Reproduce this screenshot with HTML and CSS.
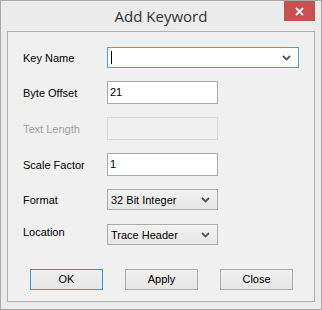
FILE: index.html
```html
<!DOCTYPE html>
<html lang="en">
<head>
    <meta charset="UTF-8">
    <title>Add Keyword</title>
    <link rel="stylesheet" href="styles.css">
</head>
<body>

    <!-- Dialog window -->
    <div class="window">
        <div class="title-bar">
            <span></span>
            <div class="title">Add Keyword</div>
            <div class="close-btn">
                <svg width="9" height="9" viewBox="0 0 9 9">
                    <path d="M1 1 L8 8 M8 1 L1 8" stroke="#fff" stroke-width="1.8" />
                </svg>
            </div>
        </div>

        <div class="client">
            <div class="form">
                <div class="row row-combo">
                    <label>Key Name</label>
                    <div class="combo combo-edit focused">
                        <span class="caret"></span>
                        <svg class="arrow" width="9" height="6" viewBox="0 0 9 6">
                            <path d="M1 1 L4.5 4.5 L8 1" fill="none" stroke="#555" stroke-width="1.8" />
                        </svg>
                    </div>
                </div>
                <div class="row row-field">
                    <label>Byte Offset</label>
                    <div class="field">21</div>
                </div>
                <div class="row row-field">
                    <label class="disabled">Text Length</label>
                    <div class="field field-disabled"></div>
                </div>
                <div class="row row-field">
                    <label>Scale Factor</label>
                    <div class="field">1</div>
                </div>
                <div class="row row-combo">
                    <label>Format</label>
                    <div class="combo combo-list">
                        <span>32 Bit Integer</span>
                        <svg class="arrow" width="9" height="6" viewBox="0 0 9 6">
                            <path d="M1 1 L4.5 4.5 L8 1" fill="none" stroke="#555" stroke-width="1.8" />
                        </svg>
                    </div>
                </div>
                <div class="row row-combo row-location">
                    <label>Location</label>
                    <div class="combo combo-list">
                        <span>Trace Header</span>
                        <svg class="arrow" width="9" height="6" viewBox="0 0 9 6">
                            <path d="M1 1 L4.5 4.5 L8 1" fill="none" stroke="#555" stroke-width="1.8" />
                        </svg>
                    </div>
                </div>
            </div>

            <div class="buttons">
                <div class="button default">OK</div>
                <div class="button">Apply</div>
                <div class="button">Close</div>
            </div>
        </div>
    </div>

</body>
</html>
```

FILE: styles.css
```css
/* Page */
body {
    margin: 0;
    font-family: "Liberation Sans", Arial, sans-serif;
    font-size: 11px;
    color: #000;
}

/* Window frame */
.window {
    width: 322px;
    height: 310px;
    box-sizing: border-box;
    border: 1px solid #a8a8a8;
    background-color: #ebebeb;
    display: flex;
    flex-direction: column;
    padding: 0 6px 7px 6px;
}

/* Title bar */
.title-bar {
    height: 30px;
    display: grid;
    grid-template-columns: 1fr auto 1fr;
    align-items: start;
}
.title {
    font-family: "Open Sans", "Noto Sans", sans-serif;
    font-size: 15px;
    color: #333;
    line-height: 30px;
}
.close-btn {
    justify-self: end;
    width: 31px;
    height: 20px;
    background-color: #c75050;
    display: flex;
    align-items: center;
    justify-content: center;
}

/* Client area */
.client {
    flex: 1;
    border: 1px solid #b0b0b0;
    background-color: #f0f0f0;
    display: flex;
    flex-direction: column;
}

.form {
    padding: 15px 0 0 15px;
    display: flex;
    flex-direction: column;
    gap: 13px;
}

.row {
    display: flex;
    align-items: center;
}
.row-combo {
    height: 21px;
}
.row-field {
    height: 23px;
}
.row-location {
    margin-top: 1px;
}
.row-location label {
    margin-top: -5px;
}

.row label {
    width: 84px;
}
.row label.disabled {
    color: #a0a0a0;
}

/* Text boxes */
.field {
    width: 111px;
    height: 23px;
    box-sizing: border-box;
    border: 1px solid #ababab;
    background-color: #fff;
    padding-left: 2px;
    line-height: 21px;
}
.field-disabled {
    background-color: #f0f0f0;
    border-color: #d9d9d9;
}

/* Combo boxes */
.combo {
    height: 21px;
    box-sizing: border-box;
    border: 1px solid #acacac;
    display: flex;
    align-items: center;
    justify-content: space-between;
    padding: 0 7px 0 3px;
}
.combo-edit {
    width: 192px;
    background-color: #fff;
}
.combo-list {
    width: 111px;
    background: linear-gradient(#f2f2f2, #e6e6e6);
}
.focused {
    border-color: #5a9de0;
}
.caret {
    width: 1px;
    height: 13px;
    background-color: #000;
}

/* Buttons */
.buttons {
    margin-top: 24px;
    padding-left: 22px;
    display: flex;
    gap: 22px;
}
.button {
    width: 73px;
    height: 21px;
    box-sizing: border-box;
    border: 1px solid #acacac;
    background: linear-gradient(#f0f0f0, #e5e5e5);
    text-align: center;
    line-height: 19px;
}
.button.default {
    border-color: #3c94f0;
}
```
